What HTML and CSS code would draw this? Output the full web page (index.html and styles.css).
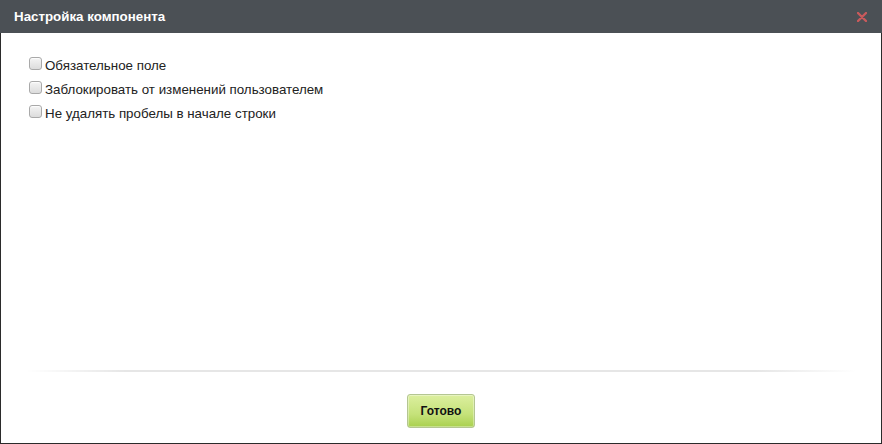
FILE: index.html
```html
<!DOCTYPE html>
<html lang="ru">
<head>
    <meta charset="UTF-8" />
    <title>Настройка компонента</title>
    <link rel="stylesheet" href="styles.css">
</head>
<body>

<div class="dialog">
    <div class="dialog-header">
        <span class="dialog-title">Настройка компонента</span>
        <span class="dialog-close" title="Закрыть">
            <svg width="10" height="10" viewBox="0 0 10 10">
                <path d="M1 1 L9 9 M9 1 L1 9" stroke="#c95a5c" stroke-width="2.4" stroke-linecap="round"/>
            </svg>
        </span>
    </div>

    <div class="dialog-body">
        <div class="options">
            <label class="option"><input type="checkbox" class="check"> Обязательное поле</label>
            <label class="option"><input type="checkbox" class="check"> Заблокировать от изменений пользователем</label>
            <label class="option"><input type="checkbox" class="check"> Не удалять пробелы в начале строки</label>
        </div>

        <div class="dialog-footer">
            <div class="separator"></div>
            <button class="btn-done">Готово</button>
        </div>
    </div>
</div>

</body>
</html>
```

FILE: styles.css
```css
body, html {
    margin: 0;
    padding: 0;
    font-family: 'Liberation Sans', Arial, sans-serif;
    background: #fff;
}

.dialog {
    width: 882px;
    height: 444px;
    display: flex;
    flex-direction: column;
    box-sizing: border-box;
}

.dialog-header {
    height: 33px;
    background: #4b5055;
    display: flex;
    align-items: center;
    justify-content: space-between;
    padding: 0 15px 0 14px;
    flex-shrink: 0;
}

.dialog-title {
    color: #fff;
    font-size: 13.33px;
    font-weight: bold;
}

.dialog-close {
    display: flex;
    cursor: pointer;
}

.dialog-body {
    flex: 1;
    display: flex;
    flex-direction: column;
    border: 1px solid #2b2b2b;
    border-top: none;
}

.options {
    flex: 1;
    padding: 20px 0 0 28px;
}

.option {
    display: flex;
    align-items: center;
    height: 24px;
    font-size: 13.33px;
    color: #222;
    gap: 3px;
}

.check {
    appearance: none;
    -webkit-appearance: none;
    width: 13px;
    height: 13px;
    margin: 0 0 4px 0;
    border: 1px solid #a9a9a9;
    border-radius: 3px;
    background: linear-gradient(180deg, #f4f4f4, #dcdcdc);
    box-shadow: inset 0 1px 1px rgba(255, 255, 255, 0.8);
    box-sizing: border-box;
}

.check:checked {
    background: linear-gradient(180deg, #dcdcdc, #f4f4f4);
}

.dialog-footer {
    display: flex;
    flex-direction: column;
    align-items: center;
    padding-bottom: 15px;
}

.separator {
    align-self: stretch;
    margin: 0 25px 22px 25px;
    height: 2px;
    background: linear-gradient(90deg, rgba(230, 230, 230, 0), #e6e6e6 12%, #e6e6e6 88%, rgba(230, 230, 230, 0));
}

.btn-done {
    width: 68px;
    height: 34px;
    font-family: 'Liberation Sans', Arial, sans-serif;
    font-size: 12px;
    font-weight: bold;
    color: #111;
    border: 1px solid #b4c692;
    border-radius: 3px;
    background: linear-gradient(180deg, #dcef9f, #c5e27a 60%, #a9d04e);
    box-shadow: inset 0 0 0 1px rgba(255, 255, 255, 0.35);
    cursor: pointer;
}

.btn-done:hover {
    background: linear-gradient(180deg, #e4f4b0, #b5d85c);
}
```
